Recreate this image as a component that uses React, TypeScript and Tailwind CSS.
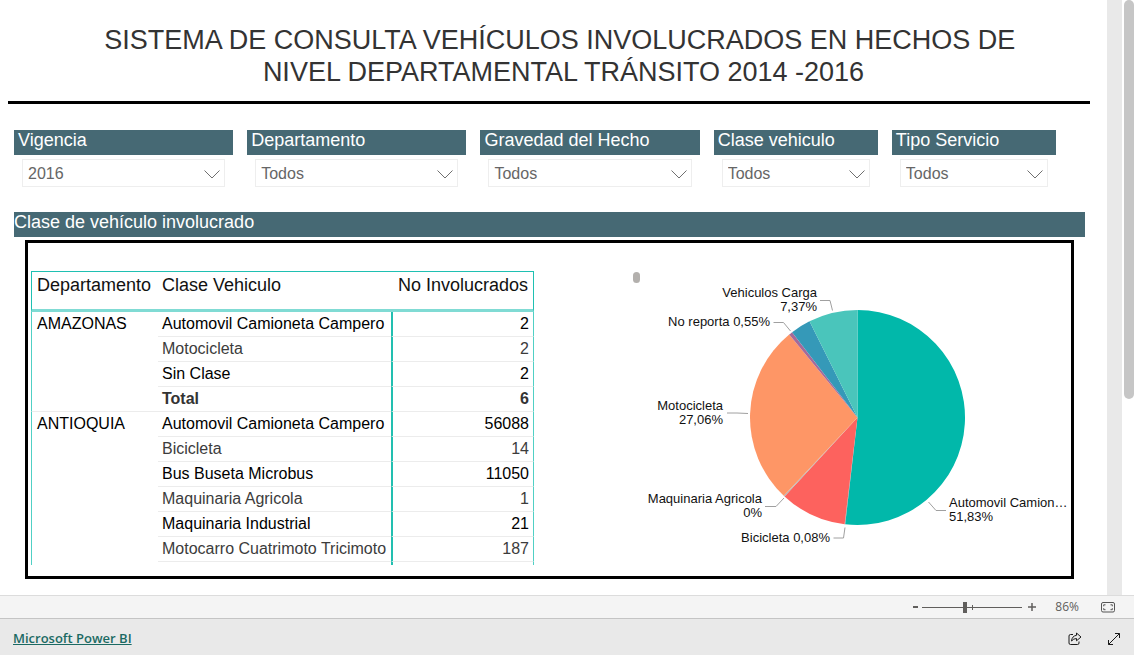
import { useState } from "react";

const slicers = [
  { id: "vigencia", label: "Vigencia", options: ["2016", "2015", "2014"] },
  { id: "departamento", label: "Departamento", options: ["Todos"] },
  { id: "gravedad", label: "Gravedad del Hecho", options: ["Todos"] },
  { id: "clase", label: "Clase vehiculo", options: ["Todos"] },
  { id: "servicio", label: "Tipo Servicio", options: ["Todos"] },
];

type Row = { dept?: string; clase: string; n: number; total?: boolean };

const rows: Row[] = [
  { dept: "AMAZONAS", clase: "Automovil Camioneta Campero", n: 2 },
  { clase: "Motocicleta", n: 2 },
  { clase: "Sin Clase", n: 2 },
  { clase: "Total", n: 6, total: true },
  { dept: "ANTIOQUIA", clase: "Automovil Camioneta Campero", n: 56088 },
  { clase: "Bicicleta", n: 14 },
  { clase: "Bus Buseta Microbus", n: 11050 },
  { clase: "Maquinaria Agricola", n: 1 },
  { clase: "Maquinaria Industrial", n: 21 },
  { clase: "Motocarro Cuatrimoto Tricimoto", n: 187 },
];

const slices = [
  { share: 51.83, color: "#01b8aa" },
  { share: 0.08, color: "#8c9a9a" },
  { share: 9.97, color: "#fd625e" },
  { share: 0.15, color: "#b0b8b8" },
  { share: 27.01, color: "#fe9666" },
  { share: 0.55, color: "#a66999" },
  { share: 3.04, color: "#3599b8" },
  { share: 7.37, color: "#4ac5bb" },
];

const CX = 227.5;
const CY = 157.5;
const R = 107.5;

function point(pct: number) {
  const a = (pct / 100) * Math.PI * 2;
  return `${(CX + R * Math.sin(a)).toFixed(2)} ${(CY - R * Math.cos(a)).toFixed(2)}`;
}

function PieChart() {
  let start = 0;
  const paths = slices.map((s) => {
    const end = start + s.share;
    const d = `M${CX} ${CY}L${point(start)}A${R} ${R} 0 ${s.share > 50 ? 1 : 0} 1 ${point(end)}Z`;
    start = end;
    return <path key={s.color} d={d} fill={s.color} />;
  });
  return (
    <svg viewBox="0 11 440 290" className="h-[290px] w-[440px]" role="img" aria-label="Clase de vehículo involucrado">
      <rect x="3" y="12" width="7" height="11" rx="3.5" fill="#b3b0ad" />
      {paths}
      <g fill="none" stroke="#a0a0a0" strokeWidth="1">
        <path d="M190 40.500H200L202.500 50.500" />
        <path d="M143.500 62.500H153.500L160.500 71" />
        <path d="M97 153H107L118 153.500" />
        <path d="M135 246.500H146L154 238" />
        <path d="M203.500 278H213.500L215 267.500" />
        <path d="M298.500 242L306 250.500H316" />
      </g>
      <g className="fill-[#111] text-[13px]">
        <g textAnchor="end">
          <text x="187" y="37">Vehiculos Carga</text>
          <text x="187" y="51">7,37%</text>
          <text x="140" y="66">No reporta 0,55%</text>
          <text x="93" y="150">Motocicleta</text>
          <text x="93" y="164">27,06%</text>
          <text x="132" y="243">Maquinaria Agricola</text>
          <text x="132" y="257">0%</text>
          <text x="200" y="282">Bicicleta 0,08%</text>
        </g>
        <text x="319" y="247">Automovil Camion…</text>
        <text x="319" y="261">51,83%</text>
      </g>
    </svg>
  );
}

function Slicer({ id, label, options }: (typeof slicers)[number]) {
  const [value, setValue] = useState(options[0]);
  return (
    <div>
      <label htmlFor={id} className="block h-[25px] bg-[#466974] px-1 text-[18px] leading-5 text-white">
        {label}
      </label>
      <div className="relative mx-2 mt-1">
        <select
          id={id}
          value={value}
          onChange={(e) => setValue(e.target.value)}
          className="block h-7 w-full appearance-none border border-[#eee] bg-white pt-0.5 pr-8 pl-[5px] text-[16px] text-[#666]"
        >
          {options.map((o) => (
            <option key={o}>{o}</option>
          ))}
        </select>
        <svg viewBox="0 0 16 9" className="pointer-events-none absolute top-[11px] right-[5px] h-[9px] w-4" fill="none" stroke="#6f6f6f">
          <path d="M.5 .5L8 8L15.500 .5" />
        </svg>
      </div>
    </div>
  );
}

function DataTable() {
  return (
    <table className="w-[503px] border-separate border-spacing-0 self-start text-[16px]">
      <thead>
        <tr className="h-[41px] text-left align-top text-[18px] leading-[26px] text-[#111]">
          <th className="w-[127px] border-t border-b-[3px] border-l border-t-[#1fc0b2] border-b-[#80dbd4] border-l-[#1fc0b2] p-0 pl-[5px] font-normal">
            Departamento
          </th>
          <th className="w-[233px] border-t border-b-[3px] border-t-[#1fc0b2] border-b-[#80dbd4] p-0 pl-1 font-normal">
            Clase Vehiculo
          </th>
          <th className="border-t border-r border-b-[3px] border-t-[#1fc0b2] border-r-[#1fc0b2] border-b-[#80dbd4] p-0 pr-[5px] text-right font-normal">
            No Involucrados
          </th>
        </tr>
      </thead>
      <tbody>
        {rows.map((r, i) => {
          const tone = r.total ? "font-bold text-[#333]" : i % 2 ? "text-[#3c3c3c]" : "text-black";
          const line = "border-b border-b-[#ececec]";
          return (
            <tr key={i} className="h-[25px] leading-6">
              {r.dept && (
                <td
                  rowSpan={r.dept === "AMAZONAS" ? 4 : 6}
                  className={`border-l border-l-[#50d0c5] p-0 pl-[5px] align-top text-black ${r.dept === "AMAZONAS" ? line : ""}`}
                >
                  {r.dept}
                </td>
              )}
              <td className={`${line} ${tone} p-0 pl-1 whitespace-nowrap`}>{r.clase}</td>
              <td className={`${line} ${tone} border-r border-l-2 border-r-[#50d0c5] border-l-[#22bfb0] p-0 pr-1 text-right`}>{r.n}</td>
            </tr>
          );
        })}
        <tr className="h-[3px]">
          <td className="border-l border-l-[#50d0c5] p-0" />
          <td className="p-0" />
          <td className="border-r border-l-2 border-r-[#50d0c5] border-l-[#22bfb0] p-0" />
        </tr>
      </tbody>
    </table>
  );
}

export default function App() {
  const [zoom, setZoom] = useState(86);
  return (
    <div className="flex min-h-screen flex-col bg-white font-['Liberation_Sans',Arial,sans-serif]">
      <div className="flex flex-1">
        <main className="min-w-0 flex-1 pb-4">
          <h1 className="pt-6 pl-5 text-center text-[27px] leading-8 text-[#333]">
            SISTEMA DE CONSULTA VEHÍCULOS INVOLUCRADOS EN HECHOS DE&nbsp;
            <br />
            NIVEL DEPARTAMENTAL TRÁNSITO 2014 -2016
          </h1>
          <hr className="mt-[13px] mr-[17px] ml-2 border-t-[3px] border-black" />
          <section className="mt-[26px] mr-[51px] ml-[14px] grid grid-cols-[219fr_219fr_219fr_164fr_164fr] gap-[14px]">
            {slicers.map((s) => (
              <Slicer key={s.id} {...s} />
            ))}
          </section>
          <h2 className="mt-[25px] mr-[22px] ml-[14px] h-[25px] bg-[#466974] text-[18px] leading-5 text-white">
            Clase de vehículo involucrado
          </h2>
          <section className="mt-[3px] mr-[33px] ml-[25px] flex justify-between border-[3px] border-black pt-7 pr-px pb-[11px] pl-[3px]">
            <DataTable />
            <PieChart />
          </section>
        </main>
        <div className="w-[15px] bg-[#e9e9e9]" />
        <div className="w-3 pl-0.5">
          <div className="h-[399px] rounded-full bg-[#c6c6c6]" />
        </div>
      </div>
      <div className="flex h-[23px] items-center justify-end border-t border-[#dcdcdc] bg-[#f4f4f4] pr-[19px] text-[#605e5c]">
        <button type="button" aria-label="Alejar" onClick={() => setZoom(zoom - 1)} className="flex h-4 w-[14px] items-center justify-center">
          <svg viewBox="0 0 5 2" className="h-0.5 w-[5px]"><path d="M0 0H5V2H0Z" fill="#605e5c" /></svg>
        </button>
        <input
          type="range"
          min="30"
          max="160"
          aria-label="Nivel de zoom"
          value={zoom}
          onChange={(e) => setZoom(Number(e.target.value))}
          className="h-3 w-[100px] appearance-none bg-[linear-gradient(#605e5c,#605e5c),linear-gradient(#605e5c,#605e5c)] bg-[size:100%_1px,1px_5px] bg-[position:0_6px,50px_4px] bg-no-repeat [&::-webkit-slider-thumb]:h-[11px] [&::-webkit-slider-thumb]:w-1 [&::-webkit-slider-thumb]:appearance-none [&::-webkit-slider-thumb]:bg-[#605e5c]"
        />
        <button type="button" aria-label="Acercar" onClick={() => setZoom(zoom + 1)} className="flex h-4 w-5 items-center justify-center">
          <svg viewBox="0 0 8 8" className="h-2 w-2" stroke="#605e5c" strokeWidth="1.5"><path d="M0 4H8M4 0V8" /></svg>
        </button>
        <span className="ml-[13px] w-6 text-right font-['Open_Sans',sans-serif] text-[12px]">{zoom}%</span>
        <button type="button" aria-label="Ajustar a la página" className="ml-[22px]">
          <svg viewBox="0 0 14 11" className="h-[11px] w-[14px]" fill="none" stroke="#555">
            <rect x=".5" y=".5" width="13" height="9.500" rx="1.500" />
            <path d="M4.500 2.800H2.700V4.300M9.500 2.800H11.300V4.300M4.500 7.700H2.700V6.200M9.500 7.700H11.300V6.200" />
          </svg>
        </button>
      </div>
      <footer className="flex h-[37px] items-center border-t border-[#c4c4c4] bg-[#e9e9e9] pt-1 pr-[13px] pl-[13px]">
        <a href="https://powerbi.microsoft.com" className="flex-1 font-['Open_Sans',sans-serif] text-[13px] font-semibold text-[#1b6a63] underline">
          Microsoft Power BI
        </a>
        <button type="button" aria-label="Compartir">
          <svg viewBox="0 0 14 14" className="h-[14px] w-[14px]" fill="none" stroke="#1a1a1a" strokeLinejoin="round">
            <path d="M5 2.500H2.500Q1 2.500 1 4V11Q1 12.500 2.500 12.500H9.500Q11 12.500 11 11V9.500" />
            <path d="M8.500 1L13 5L8.500 8.800V6.500Q5.500 6.500 3.500 9Q4 4 8.500 3.300Z" />
          </svg>
        </button>
        <button type="button" aria-label="Pantalla completa" className="ml-[25px]">
          <svg viewBox="0 0 14 14" className="h-[14px] w-[14px]" fill="none" stroke="#1a1a1a">
            <path d="M8 1.500H12.500V6M12.500 1.500L1.500 12.500M1.500 8V12.500H6" />
          </svg>
        </button>
      </footer>
    </div>
  );
}
